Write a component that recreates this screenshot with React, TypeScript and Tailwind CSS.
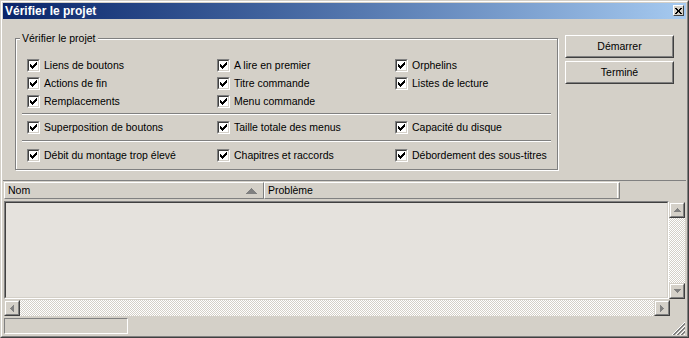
import React from "react";

const CHECK: [number, number][] = [
  [6, 0], [5, 1], [6, 1], [0, 2], [4, 2], [5, 2], [6, 2],
  [0, 3], [1, 3], [3, 3], [4, 3], [5, 3],
  [0, 4], [1, 4], [2, 4], [3, 4], [4, 4],
  [1, 5], [2, 5], [3, 5], [2, 6],
];

function Check() {
  return (
    <div className="w-[13px] h-[13px] shrink-0 border border-t-[#808080] border-l-[#808080] border-r-white border-b-white">
      <div className="relative w-full h-full border border-t-[#404040] border-l-[#404040] border-r-[#d4d0c8] border-b-[#d4d0c8] bg-white">
        <svg width="7" height="7" className="absolute left-[1px] top-[1px]" shapeRendering="crispEdges">
          {CHECK.map(([x, y]) => (
            <rect key={`${x}-${y}`} x={x} y={y} width="1" height="1" fill="#000" />
          ))}
        </svg>
      </div>
    </div>
  );
}

function Item({ label }: { label: string }) {
  return (
    <div className="flex items-center h-[13px] gap-[4px]">
      <Check />
      <span className="whitespace-nowrap leading-[13px]">{label}</span>
    </div>
  );
}

function Sep() {
  return <div className="ml-[6px] w-[529px] h-[2px] border-t border-t-[#808080] border-b border-b-white" />;
}

function Button({ label }: { label: string }) {
  return (
    <div className="w-[109px] h-[23px] border border-t-white border-l-white border-r-[#404040] border-b-[#404040]">
      <div className="h-full border border-t-[#d4d0c8] border-l-[#d4d0c8] border-r-[#808080] border-b-[#808080] flex items-center justify-center">
        {label}
      </div>
    </div>
  );
}

function Arrow({ dir }: { dir: "up" | "down" | "left" | "right" }) {
  const rects: [number, number, number, number][] = [];
  if (dir === "up") {
    rects.push([3, 0, 1, 1], [2, 1, 3, 1], [1, 2, 5, 1], [0, 3, 7, 1]);
  } else if (dir === "down") {
    rects.push([0, 0, 7, 1], [1, 1, 5, 1], [2, 2, 3, 1], [3, 3, 1, 1]);
  } else if (dir === "left") {
    rects.push([0, 3, 1, 1], [1, 2, 1, 3], [2, 1, 1, 5], [3, 0, 1, 7]);
  } else {
    rects.push([0, 0, 1, 7], [1, 1, 1, 5], [2, 2, 1, 3], [3, 3, 1, 1]);
  }
  const w = dir === "up" || dir === "down" ? 7 : 4;
  const h = dir === "up" || dir === "down" ? 4 : 7;
  return (
    <svg width={w} height={h} shapeRendering="crispEdges">
      {rects.map(([x, y, rw, rh], i) => (
        <rect key={i} x={x} y={y} width={rw} height={rh} fill="#808080" />
      ))}
    </svg>
  );
}

function SBtn({ dir }: { dir: "up" | "down" | "left" | "right" }) {
  return (
    <div className="w-[16px] h-[16px] shrink-0 border border-t-[#d4d0c8] border-l-[#d4d0c8] border-r-[#404040] border-b-[#404040]">
      <div className="h-full border border-t-white border-l-white border-r-[#808080] border-b-[#808080] bg-[#d4d0c8] flex items-center justify-center">
        <Arrow dir={dir} />
      </div>
    </div>
  );
}

const track = "bg-[repeating-conic-gradient(#ffffff_0%_25%,#d4d0c8_0%_50%)] bg-[length:2px_2px]";

function Grip() {
  const px: { x: number; y: number; c: string }[] = [];
  for (let x = 0; x < 13; x++) {
    for (let y = 0; y < 13; y++) {
      const s = x + y;
      const m = (s - 12) % 4;
      if (s < 12) continue;
      if (m === 0) px.push({ x, y, c: "#ffffff" });
      else if (m === 1 || m === 2) px.push({ x, y, c: "#808080" });
    }
  }
  return (
    <svg width="13" height="13" shapeRendering="crispEdges">
      {px.map((p, i) => (
        <rect key={i} x={p.x} y={p.y} width="1" height="1" fill={p.c} />
      ))}
    </svg>
  );
}

export default function App() {
  return (
    <div className="w-[689px] h-[338px] bg-[#d4d0c8] text-black text-[10.5px] font-['Liberation_Sans',Arial,sans-serif] border border-t-[#d4d0c8] border-l-[#d4d0c8] border-r-[#404040] border-b-[#404040]">
      <div className="h-full border border-t-white border-l-white border-r-[#808080] border-b-[#808080] p-[1px] flex flex-col">
        {/* Title bar */}
        <div className="h-[16px] shrink-0 flex items-start justify-between bg-gradient-to-r from-[#0a246a] to-[#a6caf0]">
          <span className="pl-[2px] text-white font-bold text-[12px] leading-[16px]">Vérifier le projet</span>
          <div className="mt-[2px] mr-[2px] w-[11px] h-[11px] border border-t-white border-l-white border-r-[#404040] border-b-[#404040] bg-[#d4d0c8] flex items-center justify-center">
            <svg width="7" height="6" shapeRendering="crispEdges">
              {[0, 1, 2, 3, 4, 5].map((i) => (
                <g key={i}>
                  <rect x={i} y={i} width="2" height="1" fill="#000" />
                  <rect x={5 - i} y={i} width="2" height="1" fill="#000" />
                </g>
              ))}
            </svg>
          </div>
        </div>

        {/* Top section */}
        <div className="h-[161px] shrink-0 flex items-start pt-[16px]">
          <div className="relative ml-[12px] mt-[3px] w-[543px] h-[132px] border border-[#808080] shadow-[inset_1px_1px_0_#ffffff,1px_1px_0_#ffffff]">
            <span className="absolute left-[4px] top-[-7px] px-[2px] bg-[#d4d0c8] leading-[13px] whitespace-nowrap">Vérifier le projet</span>
            <div className="grid grid-cols-[190px_178px_1fr] gap-y-[5px] pl-[11px] pt-[20px]">
              <Item label="Liens de boutons" />
              <Item label="A lire en premier" />
              <Item label="Orphelins" />
              <Item label="Actions de fin" />
              <Item label="Titre commande" />
              <Item label="Listes de lecture" />
              <Item label="Remplacements" />
              <Item label="Menu commande" />
              <div />
            </div>
            <div className="mt-[5px]"><Sep /></div>
            <div className="grid grid-cols-[190px_178px_1fr] pl-[11px] mt-[6px]">
              <Item label="Superposition de boutons" />
              <Item label="Taille totale des menus" />
              <Item label="Capacité du disque" />
            </div>
            <div className="mt-[6px]"><Sep /></div>
            <div className="grid grid-cols-[190px_178px_1fr] pl-[11px] mt-[7px]">
              <Item label="Débit du montage trop élevé" />
              <Item label="Chapitres et raccords" />
              <Item label="Débordement des sous-titres" />
            </div>
          </div>
          <div className="ml-[7px] flex flex-col gap-[3px]">
            <Button label="Démarrer" />
            <Button label="Terminé" />
          </div>
        </div>

        {/* Lower section */}
        <div className="flex-1 border-t border-t-[#808080] flex flex-col">
          <div className="mt-[1px] ml-[1px] h-[17px] flex">
            <div className="w-[260px] h-full border border-t-white border-l-white border-r-[#808080] border-b-[#808080] flex items-center justify-between pl-[3px] pr-[6px]">
              <span>Nom</span>
              <svg width="11" height="6" shapeRendering="crispEdges">
                <rect x="5" y="0" width="1" height="1" fill="#808080" />
                <rect x="4" y="1" width="3" height="1" fill="#808080" />
                <rect x="3" y="2" width="5" height="1" fill="#808080" />
                <rect x="2" y="3" width="7" height="1" fill="#808080" />
                <rect x="1" y="4" width="9" height="1" fill="#808080" />
                <rect x="0" y="5" width="11" height="1" fill="#808080" />
              </svg>
            </div>
            <div className="w-[356px] h-full border border-t-white border-l-white border-r-[#808080] border-b-[#808080] flex items-center pl-[3px] pr-[1px] justify-between">
              <span>Problème</span>
              <div className="w-[1px] h-full bg-white" />
            </div>
          </div>

          <div className="mt-[2px] h-[98px] flex">
            <div className="ml-[1px] w-[665px] h-full border border-t-[#808080] border-l-[#808080] border-r-white border-b-white">
              <div className="h-full border border-t-[#404040] border-l-[#404040] border-r-[#d4d0c8] border-b-[#d4d0c8] bg-[#e5e2dd]" />
            </div>
            <div className="mt-[1px] w-[16px] h-[97px] flex flex-col">
              <SBtn dir="up" />
              <div className={`flex-1 ${track}`} />
              <SBtn dir="down" />
            </div>
          </div>

          <div className="mt-[1px] ml-[1px] w-[666px] h-[16px] flex">
            <SBtn dir="left" />
            <div className={`flex-1 ${track}`} />
            <SBtn dir="right" />
          </div>

          <div className="mt-[2px] h-[16px] flex justify-between items-end">
            <div className="ml-[1px] w-[124px] h-[16px] border border-t-[#808080] border-l-[#808080] border-r-white border-b-white" />
            <div className="mr-[1px] mb-[-1px]">
              <Grip />
            </div>
          </div>
        </div>
      </div>
    </div>
  );
}
